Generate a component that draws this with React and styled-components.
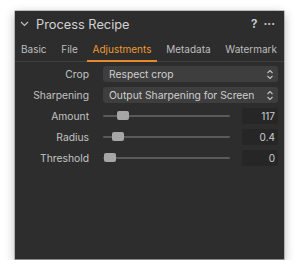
import styled, { createGlobalStyle } from "styled-components";

const GlobalStyle = createGlobalStyle`
  body {
    margin: 0;
    background: #ffffff;
    font-family: Inter, "Open Sans", "Liberation Sans", sans-serif;
    -webkit-font-smoothing: antialiased;
  }
`;

const Panel = styled.div`
  margin: 11px 0 0 15px;
  width: 269px;
  height: 249px;
  background: #2d2d2d;
  box-shadow: 0 3px 10px rgba(0, 0, 0, 0.3), 0 0 0 0.5px rgba(0, 0, 0, 0.4);
  border-bottom: 1px solid #8a8a8a;
  box-sizing: border-box;
  color: #c9c9c9;
`;

const Header = styled.div`
  height: 26px;
  display: flex;
  align-items: center;
  padding: 0 9px 0 5px;
`;

const Title = styled.div`
  flex: 1;
  display: flex;
  align-items: center;
  gap: 7px;
  font-size: 12.8px;
  color: #d2d2d2;
`;

const Actions = styled.div`
  display: flex;
  align-items: center;
  gap: 6px;
  font-size: 11.5px;
  font-weight: 700;
  color: #c9c9c9;
`;

const Tabs = styled.div`
  display: flex;
  justify-content: space-between;
  padding: 0 1px 0 0;
  border-bottom: 1px solid #404040;
  height: 24px;
`;

const Tab = styled.div`
  padding: 0 6px;
  display: flex;
  align-items: center;
  font-size: 10px;
  color: ${(p) => (p.$active ? "#ef9a2e" : "#bdbdbd")};
  border-bottom: 2px solid ${(p) => (p.$active ? "#e8892a" : "transparent")};
  margin-bottom: -1px;
`;

const Body = styled.div`
  padding: 4px 6px 0 0;
  display: flex;
  flex-direction: column;
  gap: 5px;
`;

const Row = styled.div`
  display: grid;
  grid-template-columns: 74px 1fr;
  column-gap: 14px;
  align-items: center;
  height: 16px;
`;

const Label = styled.div`
  text-align: right;
  font-size: 10.3px;
  color: #c3c3c3;
`;

const Select = styled.div`
  height: 16px;
  background: #3e3e3e;
  border-radius: 3px;
  display: flex;
  align-items: center;
  justify-content: space-between;
  padding: 0 4px 0 6px;
  font-size: 10.3px;
  color: #cfcfcf;
`;

const SliderLine = styled.div`
  display: flex;
  align-items: center;
  gap: 12px;
`;

const Track = styled.div`
  position: relative;
  flex: 1;
  height: 2px;
  background: #5a5a5a;
  border-radius: 1px;
`;

const Thumb = styled.div`
  position: absolute;
  top: -4px;
  width: 12px;
  height: 9px;
  border-radius: 2px;
  background: #a6a6a6;
`;

const Value = styled.div`
  width: 36px;
  height: 16px;
  box-sizing: border-box;
  background: #262626;
  border-radius: 2px;
  font-size: 10px;
  color: #cfcfcf;
  text-align: right;
  padding-right: 3px;
  line-height: 16px;
`;

const Chevron = () => (
  <svg width="9" height="6" viewBox="0 0 9 6">
    <path d="M1 1 L4.5 4.5 L8 1" fill="none" stroke="#bdbdbd" strokeWidth="1.2" />
  </svg>
);

const UpDown = () => (
  <svg width="8" height="11" viewBox="0 0 8 11">
    <path d="M1.5 4 L4 1.5 L6.5 4 M1.5 7 L4 9.5 L6.5 7" fill="none" stroke="#c4c4c4" strokeWidth="1.1" />
  </svg>
);

const sliders = [
  { name: "Amount", pos: 14, value: "117" },
  { name: "Radius", pos: 9, value: "0.4" },
  { name: "Threshold", pos: 1, value: "0" },
];

const App = () => (
  <>
    <GlobalStyle />
    <Panel>
      <Header>
        <Title>
          <Chevron />
          Process Recipe
        </Title>
        <Actions>
          <span>?</span>
          <span>···</span>
        </Actions>
      </Header>
      <Tabs>
        <Tab>Basic</Tab>
        <Tab>File</Tab>
        <Tab $active>Adjustments</Tab>
        <Tab>Metadata</Tab>
        <Tab>Watermark</Tab>
      </Tabs>
      <Body>
        <Row>
          <Label>Crop</Label>
          <Select>
            Respect crop
            <UpDown />
          </Select>
        </Row>
        <Row>
          <Label>Sharpening</Label>
          <Select>
            Output Sharpening for Screen
            <UpDown />
          </Select>
        </Row>
        {sliders.map((s) => (
          <Row key={s.name}>
            <Label>{s.name}</Label>
            <SliderLine>
              <Track>
                <Thumb style={{ left: s.pos }} />
              </Track>
              <Value>{s.value}</Value>
            </SliderLine>
          </Row>
        ))}
      </Body>
    </Panel>
  </>
);

export default App;
